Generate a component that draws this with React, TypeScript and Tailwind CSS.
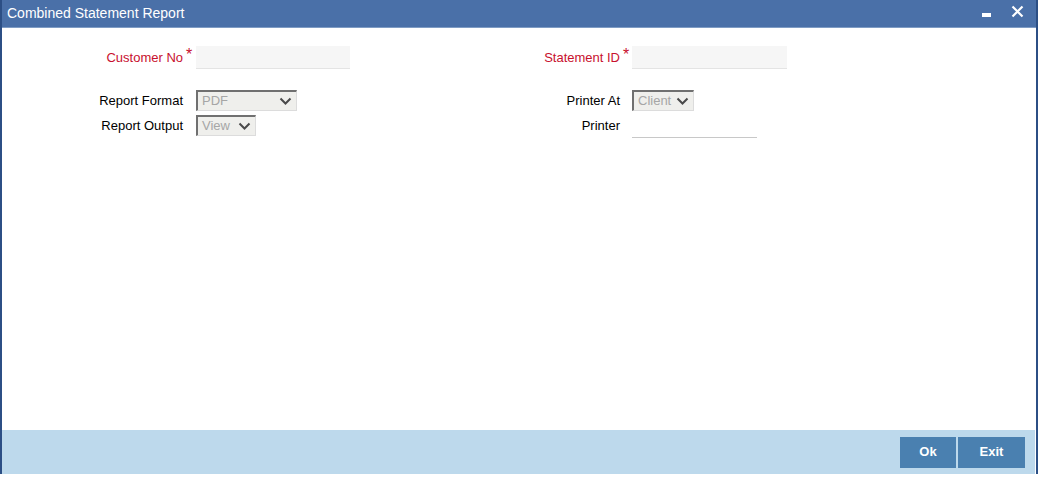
function Chevron() {
    return (
        <svg width="13" height="9" viewBox="0 0 13 9" className="shrink-0">
            <path d="M1.5 1.5 L6.5 6.5 L11.5 1.5" fill="none" stroke="#4a4a4a" strokeWidth="2" />
        </svg>
    );
}

function Select({ value, width }: { value: string; width: string }) {
    return (
        <div
            className={`${width} h-[21px] flex items-center justify-between pl-[4px] pr-[4px] bg-[#efefec] border-t-2 border-l-2 border-t-[#707070] border-l-[#707070] border-r border-b border-r-[#dcdcdc] border-b-[#dcdcdc] text-[13px] text-[#a6a6a6]`}
        >
            <span>{value}</span>
            <Chevron />
        </div>
    );
}

function Label({ text, required, gap = 'w-[13px]' }: { text: string; required?: boolean; gap?: string }) {
    return (
        <>
            <div className={`w-[181px] text-right text-[13px] ${required ? 'text-[#c8102e]' : 'text-black'}`}>{text}</div>
            <div className={`${gap} self-start text-[#c8102e] text-[16px] leading-none pl-[3px] pt-[1px]`}>{required ? '*' : ''}</div>
        </>
    );
}

export default function App() {
    return (
        <div className="w-[1038px] h-[483px] bg-white" style={{ fontFamily: '"Liberation Sans", Arial, sans-serif' }}>
            <div className="h-[474px] flex flex-col border-l-2 border-r-2 border-[#2c4f85]">
                {/* title bar */}
                <div className="h-[28px] shrink-0 bg-[#4a70a8] border-b border-b-[#7f9cc4] flex items-center justify-between pl-[5px] pr-[12px]">
                    <span className="text-white text-[14px]">Combined Statement Report</span>
                    <div className="flex items-center gap-[20px]">
                        <div className="w-[9px] h-[4px] bg-white mt-[2px]" />
                        <svg width="13" height="13" viewBox="0 0 13 13" className="mb-[5px]">
                            <path d="M1.5 1.5 L11.5 11.5 M11.5 1.5 L1.5 11.5" stroke="white" strokeWidth="2.2" />
                        </svg>
                    </div>
                </div>

                {/* body */}
                <div className="flex-1 pt-[18px]">
                    <div className="flex">
                        {/* left column */}
                        <div className="w-[437px] flex flex-col">
                            <div className="flex items-center h-[23px]">
                                <Label text="Customer No" required />
                                <div className="w-[154px] h-[23px] bg-[#f6f6f6] border-b border-b-[#e4e4e4]" />
                            </div>
                            <div className="flex items-center h-[21px] mt-[21px]">
                                <Label text="Report Format" />
                                <Select value="PDF" width="w-[101px]" />
                            </div>
                            <div className="flex items-center h-[21px] mt-[4px]">
                                <Label text="Report Output" />
                                <Select value="View" width="w-[60px]" />
                            </div>
                        </div>
                        {/* right column */}
                        <div className="flex flex-col">
                            <div className="flex items-center h-[23px]">
                                <Label text="Statement ID" required gap="w-[12px]" />
                                <div className="w-[155px] h-[23px] bg-[#f6f6f6] border-b border-b-[#e4e4e4]" />
                            </div>
                            <div className="flex items-center h-[21px] mt-[21px]">
                                <Label text="Printer At" gap="w-[12px]" />
                                <Select value="Client" width="w-[62px]" />
                            </div>
                            <div className="flex items-center h-[21px] mt-[4px]">
                                <Label text="Printer" gap="w-[12px]" />
                                <div className="w-[125px] h-[22px] mt-[2px] bg-white border-b border-b-[#c8c8c8]" />
                            </div>
                        </div>
                    </div>
                </div>

                {/* footer */}
                <div className="h-[44px] shrink-0 bg-[#bdd9ec] mr-[1px] flex items-center justify-end pr-[10px] gap-[2px]">
                    <button className="w-[56px] h-[31px] bg-[#4a80b0] text-white text-[13px] font-bold">Ok</button>
                    <button className="w-[67px] h-[31px] bg-[#4a80b0] text-white text-[13px] font-bold">Exit</button>
                </div>
            </div>
        </div>
    );
}
